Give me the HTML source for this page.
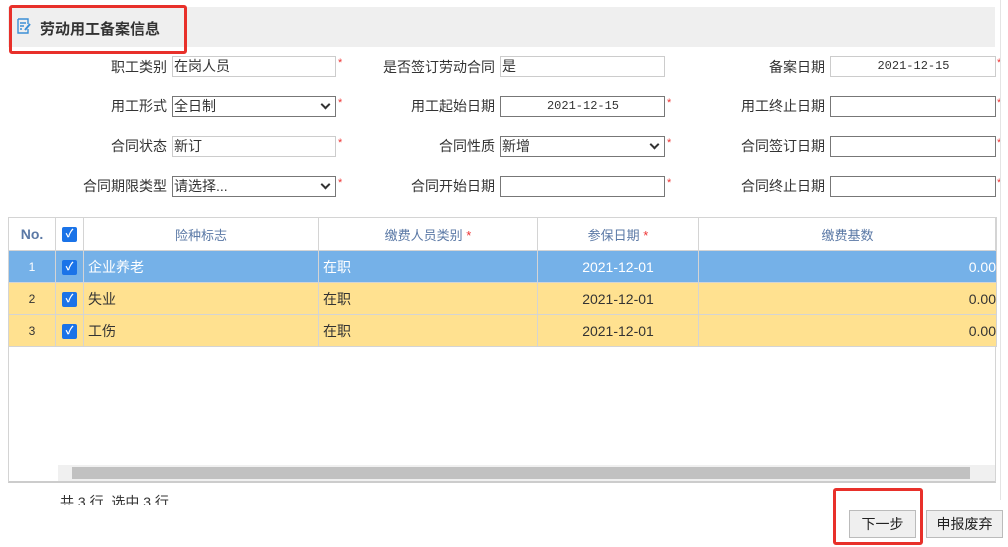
<!DOCTYPE html>
<html><head><meta charset="utf-8"><style>
*{box-sizing:border-box;margin:0;padding:0}
body{width:1008px;height:547px;background:#fff;font-family:"Liberation Sans","Noto Sans CJK SC",sans-serif;font-size:14px;color:#333;position:relative;overflow:hidden}
.a{position:absolute}
.title{left:8px;top:7px;width:987px;height:40px;background:#efefef}
.red{border:3px solid #e8302a;border-radius:3px}
.lbl{text-align:right;width:160px;height:20px;line-height:20px;font-size:14px;color:#333}
.inp{height:21px;border:1px solid #ccc;background:#fff;font-size:14px;line-height:19px;padding-left:1px}
.sel{border:1px solid #777}
.dt{border:1px solid #777;font-family:"Liberation Mono",monospace;font-size:12px;text-align:center}
.st{color:#e33;font-size:11px}
.arrow{position:absolute;right:6px;top:4px;width:7px;height:7px;border-right:2px solid #333;border-bottom:2px solid #333;transform:rotate(45deg)}
table{border-collapse:collapse;position:absolute;left:8px;top:217px;font-size:14px}
td{border:1px solid #d4d4d4;height:32px}
th{border:1px solid #d4d4d4;height:33px;color:#5b79a6;font-weight:normal;font-size:13px}
.cb{display:inline-block;width:15px;height:15px;background:#1a73e8;border-radius:2px;color:#fff;font-size:11px;line-height:15px;text-align:center;vertical-align:middle;font-weight:bold}
.sel1 td{background:#75b1e8;color:#fff}
.y td{background:#ffe190}
.btn{border:1px solid #bbb;background:#efefef;height:28px;line-height:26px;text-align:center;font-size:14px;color:#222}
</style></head><body>
<div class="a title"></div>
<div class="a red" style="left:9px;top:5px;width:178px;height:49px"></div>
<svg class="a" style="left:16px;top:18px" width="16" height="16" viewBox="0 0 16 16"><path d="M2 1h10v5M12 11v4H2V1M4 5h6M4 8h4M4 11h2" fill="none" stroke="#3b8fd6" stroke-width="1.4"/><path d="M9 12l5-6" stroke="#3b8fd6" stroke-width="2"/></svg>
<div class="a" style="left:40px;top:18px;font-weight:bold;font-size:15px;color:#333">劳动用工备案信息</div>

<div class="a lbl" style="left:7px;top:57px">职工类别</div>
<div class="a inp" style="left:172px;top:56px;width:164px">在岗人员</div>
<div class="a st" style="left:338px;top:57px">*</div>
<div class="a lbl" style="left:335px;top:57px">是否签订劳动合同</div>
<div class="a inp" style="left:500px;top:56px;width:165px">是</div>
<div class="a lbl" style="left:665px;top:57px">备案日期</div>
<div class="a inp dt" style="left:830px;top:56px;width:166px;border-color:#ccc">2021-12-15</div>
<div class="a st" style="left:997px;top:57px">*</div>

<div class="a lbl" style="left:7px;top:96px">用工形式</div>
<div class="a inp sel" style="left:172px;top:96px;width:164px">全日制<span class="arrow"></span></div>
<div class="a st" style="left:338px;top:97px">*</div>
<div class="a lbl" style="left:335px;top:96px">用工起始日期</div>
<div class="a inp dt" style="left:500px;top:96px;width:165px">2021-12-15</div>
<div class="a st" style="left:667px;top:97px">*</div>
<div class="a lbl" style="left:665px;top:96px">用工终止日期</div>
<div class="a inp dt" style="left:830px;top:96px;width:166px"></div>
<div class="a st" style="left:997px;top:97px">*</div>

<div class="a lbl" style="left:7px;top:136px">合同状态</div>
<div class="a inp" style="left:172px;top:136px;width:164px">新订</div>
<div class="a st" style="left:338px;top:137px">*</div>
<div class="a lbl" style="left:335px;top:136px">合同性质</div>
<div class="a inp sel" style="left:500px;top:136px;width:165px">新增<span class="arrow"></span></div>
<div class="a st" style="left:667px;top:137px">*</div>
<div class="a lbl" style="left:665px;top:136px">合同签订日期</div>
<div class="a inp dt" style="left:830px;top:136px;width:166px"></div>
<div class="a st" style="left:997px;top:137px">*</div>

<div class="a lbl" style="left:7px;top:176px">合同期限类型</div>
<div class="a inp sel" style="left:172px;top:176px;width:164px">请选择...<span class="arrow"></span></div>
<div class="a st" style="left:338px;top:177px">*</div>
<div class="a lbl" style="left:335px;top:176px">合同开始日期</div>
<div class="a inp dt" style="left:500px;top:176px;width:165px"></div>
<div class="a st" style="left:667px;top:177px">*</div>
<div class="a lbl" style="left:665px;top:176px">合同终止日期</div>
<div class="a inp dt" style="left:830px;top:176px;width:166px"></div>
<div class="a st" style="left:997px;top:177px">*</div>

<div class="a" style="left:8px;top:217px;width:988px;height:266px;border:1px solid #d4d4d4;border-bottom:2px solid #ccc"></div>
<table>
<tr><th style="width:47px;font-weight:bold;font-size:14px">No.</th><th style="width:28px"><span class="cb">✓</span></th><th style="width:235px">险种标志</th><th style="width:219px">缴费人员类别 <span style="color:#e33">*</span></th><th style="width:161px">参保日期 <span style="color:#e33">*</span></th><th style="width:298px">缴费基数</th></tr>
<tr class="sel1"><td style="text-align:center;font-size:12px">1</td><td style="text-align:center"><span class="cb">✓</span></td><td style="padding-left:4px">企业养老</td><td style="padding-left:4px">在职</td><td style="text-align:center">2021-12-01</td><td style="text-align:right">0.00</td></tr>
<tr class="y"><td style="text-align:center;font-size:12px">2</td><td style="text-align:center"><span class="cb">✓</span></td><td style="padding-left:4px">失业</td><td style="padding-left:4px">在职</td><td style="text-align:center">2021-12-01</td><td style="text-align:right">0.00</td></tr>
<tr class="y"><td style="text-align:center;font-size:12px">3</td><td style="text-align:center"><span class="cb">✓</span></td><td style="padding-left:4px">工伤</td><td style="padding-left:4px">在职</td><td style="text-align:center">2021-12-01</td><td style="text-align:right">0.00</td></tr>
</table>
<div class="a" style="left:58px;top:465px;width:937px;height:16px;background:#f0f0f0"></div>
<div class="a" style="left:72px;top:467px;width:898px;height:12px;background:#c1c1c1"></div>
<div class="a" style="left:1000px;top:0;width:8px;height:500px;border-left:1px solid #e4e4e4"></div>
<div class="a" style="left:60px;top:492px;font-size:14px">共 3 行, 选中 3 行</div>
<div class="a" style="left:8px;top:505px;width:820px;height:42px;background:#fff"></div>
<div class="a btn" style="left:849px;top:510px;width:67px">下一步</div>
<div class="a red" style="left:833px;top:488px;width:90px;height:57px"></div>
<div class="a btn" style="left:926px;top:510px;width:77px">申报废弃</div>
</body></html>
